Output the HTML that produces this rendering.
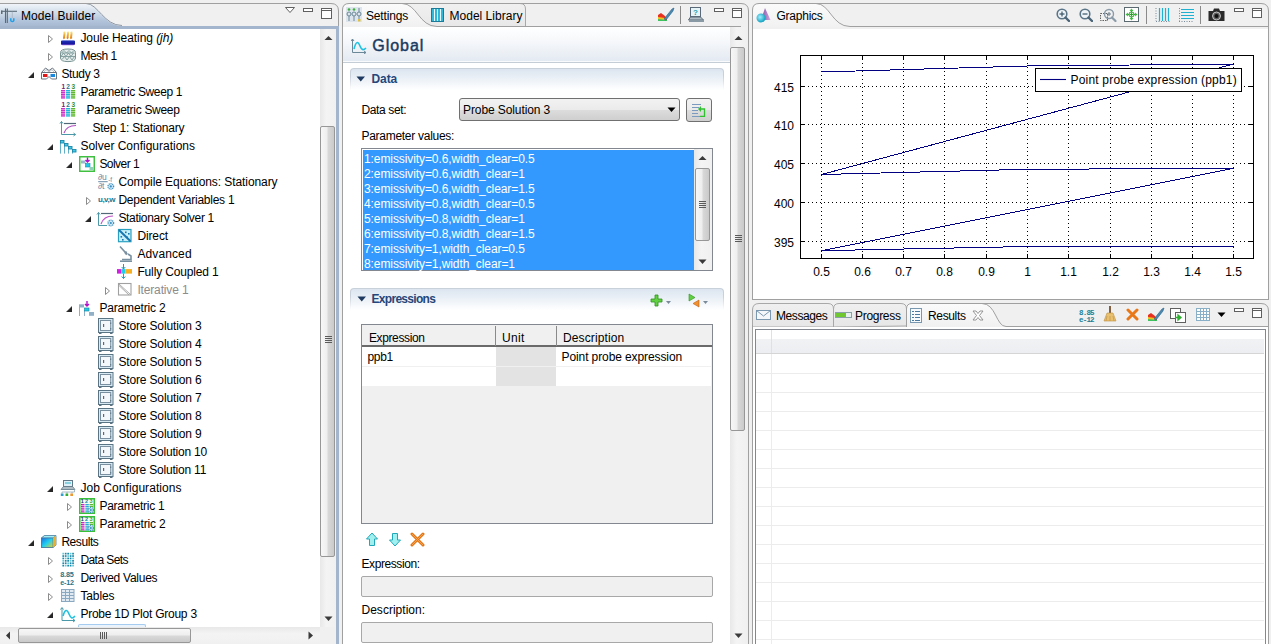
<!DOCTYPE html><html><head><meta charset="utf-8"><style>html,body{margin:0;padding:0;}body{width:1271px;height:644px;overflow:hidden;position:relative;background:#f0f0f0;font-family:"Liberation Sans", sans-serif;}div,svg{box-sizing:border-box;}</style></head><body>
<svg style="position:absolute;left:0px;top:0px;" width="342" height="30" viewBox="0 0 342 30"><defs><linearGradient id="mbg" x1="0" y1="0" x2="0" y2="1"><stop offset="0" stop-color="#f0f4f9"/><stop offset="0.3" stop-color="#d5e0ec"/><stop offset="0.65" stop-color="#b3c5db"/><stop offset="1" stop-color="#9fb3cc"/></linearGradient></defs><path d="M0,4 L86,4 C98,4 104,26 122,26 L122,29 L0,29 Z" fill="url(#mbg)"/><path d="M86,3.5 C98,3.5 104,25.5 122,25.5" stroke="#8e99a6" stroke-width="1" fill="none"/><path d="M0,3.5 L331,3.5 Q338.5,3.5 338.5,11 L338.5,26" stroke="#a0a0a0" stroke-width="1" fill="none"/><rect x="0" y="26" width="339" height="3" fill="#a3b5cc"/></svg>
<div style="position:absolute;left:336px;top:26px;width:3px;height:618px;background:#a3b5cc;"></div>
<svg style="position:absolute;left:0px;top:7px;" width="18" height="17" viewBox="0 0 18 17"><path d="M5.5,1.5 L5.5,16 M7.3,1.5 L7.3,16" stroke="#5a6a78" stroke-width="1.1" fill="none"/><path d="M1,4.3 L17,4.3" stroke="#5a6a78" stroke-width="1.1"/><rect x="1" y="3.5" width="1.5" height="3.5" fill="#5a6a78"/><path d="M12.3,4.8 L12.3,11" stroke="#a8b4c0" stroke-width="0.8"/><path d="M10.8,11.2 L10.8,13.5 Q10.8,14.5 12.3,14.5 Q13.8,14.5 13.8,13.5 L13.8,11.2" stroke="#20a0e8" stroke-width="1.5" fill="none"/></svg>
<div style="position:absolute;left:21px;top:10.24px;font-size:12px;line-height:12px;color:#000;white-space:nowrap;letter-spacing:0.068px;">Model Builder</div>
<svg style="position:absolute;left:284px;top:6px;" width="52" height="14" viewBox="0 0 52 14"><path d="M1.5,1.5 L10.5,1.5 L6,6.5 Z" fill="#fff" stroke="#606060" stroke-width="1"/><rect x="19.5" y="2.5" width="9" height="3" fill="#fff" stroke="#606060"/><rect x="37.5" y="2.5" width="10" height="10" fill="#fff" stroke="#606060"/><path d="M38,4.5 L47,4.5" stroke="#606060"/></svg>
<div style="position:absolute;left:0px;top:29px;width:320px;height:598px;background:#fff;"></div>
<div style="position:absolute;left:320px;top:29px;width:16px;height:598px;background:linear-gradient(to right,#e8e8e8,#f4f4f4 40%,#f0f0f0);"></div>
<div style="position:absolute;left:320px;top:126px;width:15px;height:431px;border:1px solid #979797;border-radius:2px;background:linear-gradient(to right,#f7f7f7 0%,#eeeeee 48%,#d9d9d9 52%,#cacaca 100%);"></div>
<svg style="position:absolute;left:325px;top:336px;" width="7" height="8" viewBox="0 0 7 8"><path d="M0,0.5 H7 M0,2.5 H7 M0,4.5 H7 M0,6.5 H7" stroke="#5a5a5a" stroke-width="1"/></svg>
<svg style="position:absolute;left:324px;top:35px;" width="9" height="6" viewBox="0 0 9 6"><path d="M0.5,5 L4.5,1 L8.5,5 Z" fill="#3a3a3a"/></svg>
<svg style="position:absolute;left:324px;top:616px;" width="9" height="6" viewBox="0 0 9 6"><path d="M0.5,0.5 L4.5,5 L8.5,0.5 Z" fill="#3a3a3a"/></svg>
<div style="position:absolute;left:0px;top:627px;width:320px;height:17px;background:linear-gradient(to bottom,#e8e8e8,#f4f4f4 40%,#f0f0f0);"></div>
<div style="position:absolute;left:18px;top:628px;width:173px;height:15px;border:1px solid #979797;border-radius:2px;background:linear-gradient(to bottom,#f7f7f7 0%,#eeeeee 48%,#d9d9d9 52%,#cacaca 100%);"></div>
<svg style="position:absolute;left:100px;top:632px;" width="8" height="7" viewBox="0 0 8 7"><path d="M0.5,0 V7 M2.5,0 V7 M4.5,0 V7 M6.5,0 V7" stroke="#5a5a5a" stroke-width="1"/></svg>
<svg style="position:absolute;left:5px;top:631px;" width="6" height="9" viewBox="0 0 6 9"><path d="M5,0.5 L1,4.5 L5,8.5 Z" fill="#3a3a3a"/></svg>
<svg style="position:absolute;left:308px;top:631px;" width="6" height="9" viewBox="0 0 6 9"><path d="M0.5,0.5 L5,4.5 L0.5,8.5 Z" fill="#3a3a3a"/></svg>
<div style="position:absolute;left:320px;top:627px;width:16px;height:17px;background:#f0f0f0;"></div>
<svg style="position:absolute;left:48px;top:35px;" width="6" height="9" viewBox="0 0 6 9"><path d="M0.5,0.5 L4.5,4 L0.5,7.5 Z" fill="#fff" stroke="#8c8c8c" stroke-width="1"/></svg>
<svg style="position:absolute;left:60px;top:30px;overflow:visible;" width="16" height="16" viewBox="0 0 16 16"><defs><linearGradient id="fl" x1="0" y1="0" x2="0" y2="1"><stop offset="0" stop-color="#f8e890"/><stop offset="0.5" stop-color="#f0a830"/><stop offset="1" stop-color="#e08010"/></linearGradient><linearGradient id="dk" x1="0" y1="0" x2="0" y2="1"><stop offset="0" stop-color="#5868d0"/><stop offset="0.25" stop-color="#1a28b0"/><stop offset="0.7" stop-color="#1818a0"/><stop offset="1" stop-color="#9060d8"/></linearGradient></defs><path d="M4.5,8.6 C3,6.5 5.5,4.5 4.2,1.6 M8,8.6 C6.5,6.5 9,4.5 7.7,1.6 M11.5,8.6 C10,6.5 12.5,4.5 11.2,1.6" stroke="url(#fl)" stroke-width="2" fill="none"/><path d="M1,11 Q1,10.3 3,10.3 L13,10.3 Q15,10.3 15,11 L15,14.3 Q15,15.3 13,15.3 L3,15.3 Q1,15.3 1,14.3 Z" fill="url(#dk)"/></svg>
<div style="position:absolute;left:80.4px;top:32.04px;font-size:12px;line-height:12px;color:#000;white-space:nowrap;letter-spacing:-0.067px;">Joule Heating <i>(jh)</i></div>
<svg style="position:absolute;left:48px;top:53px;" width="6" height="9" viewBox="0 0 6 9"><path d="M0.5,0.5 L4.5,4 L0.5,7.5 Z" fill="#fff" stroke="#8c8c8c" stroke-width="1"/></svg>
<svg style="position:absolute;left:60px;top:48px;overflow:visible;" width="16" height="16" viewBox="0 0 16 16"><path d="M0.5,4.5 Q0.5,1 8,1 Q15.5,1 15.5,4.5 L15.5,10 Q15.5,13.6 8,13.6 Q0.5,13.6 0.5,10 Z" fill="#e4ecec" stroke="#7a9494" stroke-width="1"/><path d="M1.5,5 L4,2.5 L6.5,5 L9,2.5 L11.5,5 L14,2.5 M1.5,5 L14.5,5 M1,8.5 L3.5,5 L6,8.5 L8.5,5 L11,8.5 L13.5,5 M1,8.5 L15,8.5 M2,11.5 L4.5,8.5 L7,12 L9.5,8.5 L12,12 L14.5,8.5" stroke="#7e9a9a" stroke-width="0.9" fill="none"/></svg>
<div style="position:absolute;left:80.4px;top:50.04px;font-size:12px;line-height:12px;color:#000;white-space:nowrap;letter-spacing:-0.496px;">Mesh 1</div>
<svg style="position:absolute;left:28px;top:72px;" width="7" height="7" viewBox="0 0 7 7"><path d="M6,0 L6,6 L0,6 Z" fill="#3c3c3c"/><path d="M6,1 L6,6 L1,6 Z" fill="#262626"/></svg>
<svg style="position:absolute;left:41px;top:66px;overflow:visible;" width="16" height="16" viewBox="0 0 16 16"><path d="M0.5,6.5 L4.5,2 L8,4.5 L11.5,2 L15.5,6.5" stroke="#6a7480" stroke-width="1" fill="none"/><path d="M3,6 L5,3.5 L8,6 L11,3.5 L13,6" stroke="#a8b0b8" stroke-width="0.8" fill="none"/><path d="M0.5,6.5 L15.5,6.5 L15.5,13 L10.5,13 L8,10.5 L5.5,13 L0.5,13 Z" fill="#ffffff" stroke="#6a7480" stroke-width="1"/><rect x="2" y="8" width="4.5" height="3" fill="#e01818"/><rect x="9.5" y="8" width="4.5" height="3" fill="#1888e0"/></svg>
<div style="position:absolute;left:61.4px;top:68.04px;font-size:12px;line-height:12px;color:#000;white-space:nowrap;letter-spacing:-0.353px;">Study 3</div>
<svg style="position:absolute;left:61px;top:84px;overflow:visible;" width="16" height="16" viewBox="0 0 16 16"><rect x="0" y="6.0" width="4.2" height="1.4" fill="#d030c8"/><rect x="0" y="7.8" width="4.2" height="1.4" fill="#d030c8"/><rect x="0" y="9.6" width="4.2" height="1.4" fill="#d030c8"/><rect x="0" y="11.4" width="4.2" height="1.4" fill="#d030c8"/><rect x="0" y="13.2" width="4.2" height="1.4" fill="#d030c8"/><rect x="5" y="6.0" width="4.2" height="1.4" fill="#20b8d8"/><rect x="5" y="7.8" width="4.2" height="1.4" fill="#20b8d8"/><rect x="5" y="9.6" width="4.2" height="1.4" fill="#20b8d8"/><rect x="5" y="11.4" width="4.2" height="1.4" fill="#20b8d8"/><rect x="5" y="13.2" width="4.2" height="1.4" fill="#20b8d8"/><rect x="10" y="6.0" width="4.2" height="1.4" fill="#60b830"/><rect x="10" y="7.8" width="4.2" height="1.4" fill="#60b830"/><rect x="10" y="9.6" width="4.2" height="1.4" fill="#60b830"/><rect x="10" y="11.4" width="4.2" height="1.4" fill="#60b830"/><rect x="10" y="13.2" width="4.2" height="1.4" fill="#60b830"/><text x="0.6" y="5" font-size="6.5" font-family="Liberation Sans" font-weight="bold" fill="#702070">1</text><text x="5.2" y="5" font-size="6.5" font-family="Liberation Sans" font-weight="bold" fill="#1a8098">2</text><text x="10.4" y="5" font-size="6.5" font-family="Liberation Sans" font-weight="bold" fill="#409020">3</text></svg>
<div style="position:absolute;left:80.4px;top:86.04px;font-size:12px;line-height:12px;color:#000;white-space:nowrap;letter-spacing:-0.351px;">Parametric Sweep 1</div>
<svg style="position:absolute;left:61px;top:102px;overflow:visible;" width="16" height="16" viewBox="0 0 16 16"><rect x="0" y="6.0" width="4.2" height="1.4" fill="#d030c8"/><rect x="0" y="7.8" width="4.2" height="1.4" fill="#d030c8"/><rect x="0" y="9.6" width="4.2" height="1.4" fill="#d030c8"/><rect x="0" y="11.4" width="4.2" height="1.4" fill="#d030c8"/><rect x="0" y="13.2" width="4.2" height="1.4" fill="#d030c8"/><rect x="5" y="6.0" width="4.2" height="1.4" fill="#20b8d8"/><rect x="5" y="7.8" width="4.2" height="1.4" fill="#20b8d8"/><rect x="5" y="9.6" width="4.2" height="1.4" fill="#20b8d8"/><rect x="5" y="11.4" width="4.2" height="1.4" fill="#20b8d8"/><rect x="5" y="13.2" width="4.2" height="1.4" fill="#20b8d8"/><rect x="10" y="6.0" width="4.2" height="1.4" fill="#60b830"/><rect x="10" y="7.8" width="4.2" height="1.4" fill="#60b830"/><rect x="10" y="9.6" width="4.2" height="1.4" fill="#60b830"/><rect x="10" y="11.4" width="4.2" height="1.4" fill="#60b830"/><rect x="10" y="13.2" width="4.2" height="1.4" fill="#60b830"/><text x="0.6" y="5" font-size="6.5" font-family="Liberation Sans" font-weight="bold" fill="#702070">1</text><text x="5.2" y="5" font-size="6.5" font-family="Liberation Sans" font-weight="bold" fill="#1a8098">2</text><text x="10.4" y="5" font-size="6.5" font-family="Liberation Sans" font-weight="bold" fill="#409020">3</text></svg>
<div style="position:absolute;left:86.4px;top:104.04px;font-size:12px;line-height:12px;color:#000;white-space:nowrap;letter-spacing:-0.304px;">Parametric Sweep</div>
<svg style="position:absolute;left:61px;top:120px;overflow:visible;" width="16" height="16" viewBox="0 0 16 16"><path d="M0.5,1.5 L0.5,14.5 L14.5,14.5" stroke="#4a98a8" stroke-width="1" fill="none"/><path d="M-1,3.5 L0.5,1.5 L2,3.5 M12.5,13 L14.5,14.5 L12.5,16" stroke="#4a98a8" fill="none"/><path d="M3,13 C5,7 9,5.5 15,5.5" stroke="#b050c0" stroke-width="1.2" fill="none"/><path d="M3,3.5 L15,3.5" stroke="#506878" stroke-width="1.2"/></svg>
<div style="position:absolute;left:92.4px;top:122.04px;font-size:12px;line-height:12px;color:#000;white-space:nowrap;letter-spacing:-0.187px;">Step 1: Stationary</div>
<svg style="position:absolute;left:47px;top:144px;" width="7" height="7" viewBox="0 0 7 7"><path d="M6,0 L6,6 L0,6 Z" fill="#3c3c3c"/><path d="M6,1 L6,6 L1,6 Z" fill="#262626"/></svg>
<svg style="position:absolute;left:60px;top:138px;overflow:visible;" width="16" height="16" viewBox="0 0 16 16"><path d="M0.5,2 L0.5,15.6 M4.5,5 L4.5,15.6 M8.5,8 L8.5,15.6 M12.5,11 L12.5,15.6" stroke="#60b0c8" stroke-width="1" fill="none"/><rect x="0.5" y="2.5" width="3.5" height="2.5" fill="#40c8e8" stroke="#1a88a8" stroke-width="0.9"/><rect x="4.5" y="5.5" width="3.5" height="2.5" fill="#40c8e8" stroke="#1a88a8" stroke-width="0.9"/><rect x="8.5" y="8.5" width="3.5" height="2.5" fill="#40c8e8" stroke="#1a88a8" stroke-width="0.9"/><rect x="12.5" y="11.5" width="3.5" height="2.5" fill="#40c8e8" stroke="#1a88a8" stroke-width="0.9"/></svg>
<div style="position:absolute;left:80.4px;top:140.04px;font-size:12px;line-height:12px;color:#000;white-space:nowrap;letter-spacing:-0.006px;">Solver Configurations</div>
<svg style="position:absolute;left:66px;top:162px;" width="7" height="7" viewBox="0 0 7 7"><path d="M6,0 L6,6 L0,6 Z" fill="#3c3c3c"/><path d="M6,1 L6,6 L1,6 Z" fill="#262626"/></svg>
<svg style="position:absolute;left:79px;top:156px;overflow:visible;" width="16" height="16" viewBox="0 0 16 16"><rect x="0.75" y="0.75" width="14.5" height="14.5" fill="#fff" stroke="#40c040" stroke-width="1.5"/><rect x="2" y="4.5" width="4.5" height="3" fill="#98b8d0"/><rect x="6.5" y="7.5" width="4.5" height="3.5" fill="#20c8e8" stroke="#1a90a8" stroke-width="0.6"/><rect x="10.5" y="11" width="4" height="3" fill="#90d0b8"/><path d="M8.5,1.5 L8.5,6 M6.5,4 L8.5,6 L10.5,4" stroke="#b010c8" stroke-width="1.4" fill="none"/></svg>
<div style="position:absolute;left:99.4px;top:158.04px;font-size:12px;line-height:12px;color:#000;white-space:nowrap;letter-spacing:-0.55px;">Solver 1</div>
<svg style="position:absolute;left:98px;top:174px;overflow:visible;" width="16" height="16" viewBox="0 0 16 16"><text x="0" y="6.3" font-size="8.5" font-family="Liberation Sans" fill="#6a8aa8" letter-spacing="-0.3">∂u</text><rect x="0.2" y="7.2" width="9.5" height="1" fill="#6a8aa8"/><text x="0" y="15" font-size="8.5" font-family="Liberation Sans" fill="#6a8aa8" letter-spacing="-0.3">∂t</text><text x="10.2" y="7.5" font-size="6.5" font-family="Liberation Sans" fill="#6a8aa8">-f</text><circle cx="12.8" cy="12.4" r="2.8" fill="#cfe8f6" stroke="#3a90c0" stroke-width="1.3" stroke-dasharray="1 0.8"/><circle cx="12.8" cy="12.4" r="1.12" fill="#3a90c0"/></svg>
<div style="position:absolute;left:118.4px;top:176.04px;font-size:12px;line-height:12px;color:#000;white-space:nowrap;letter-spacing:-0.079px;">Compile Equations: Stationary</div>
<svg style="position:absolute;left:86px;top:197px;" width="6" height="9" viewBox="0 0 6 9"><path d="M0.5,0.5 L4.5,4 L0.5,7.5 Z" fill="#fff" stroke="#8c8c8c" stroke-width="1"/></svg>
<svg style="position:absolute;left:98px;top:192px;overflow:visible;" width="16" height="16" viewBox="0 0 16 16"><text x="0" y="10.4" font-size="8" font-weight="bold" font-family="Liberation Sans" fill="#1a7890" letter-spacing="-0.5">u,v,w</text></svg>
<div style="position:absolute;left:118.4px;top:194.04px;font-size:12px;line-height:12px;color:#000;white-space:nowrap;letter-spacing:-0.251px;">Dependent Variables 1</div>
<svg style="position:absolute;left:85px;top:216px;" width="7" height="7" viewBox="0 0 7 7"><path d="M6,0 L6,6 L0,6 Z" fill="#3c3c3c"/><path d="M6,1 L6,6 L1,6 Z" fill="#262626"/></svg>
<svg style="position:absolute;left:98px;top:210px;overflow:visible;" width="16" height="16" viewBox="0 0 16 16"><path d="M0.5,2.5 L0.5,15.5 L9,15.5" stroke="#4a98a8" stroke-width="1" fill="none"/><path d="M-1,4.5 L0.5,2.5 L2,4.5" stroke="#4a98a8" fill="none"/><path d="M3,14 C5,8 9,6 15,6" stroke="#c050c8" stroke-width="1.2" fill="none"/><path d="M3,3.5 L15,3.5" stroke="#506878" stroke-width="1.2"/><circle cx="12.8" cy="13" r="2.8" fill="#cfe8f6" stroke="#3a90c0" stroke-width="1.3" stroke-dasharray="1 0.8"/><circle cx="12.8" cy="13" r="1.12" fill="#3a90c0"/></svg>
<div style="position:absolute;left:118.4px;top:212.04px;font-size:12px;line-height:12px;color:#000;white-space:nowrap;letter-spacing:-0.306px;">Stationary Solver 1</div>
<svg style="position:absolute;left:117px;top:228px;overflow:visible;" width="16" height="16" viewBox="0 0 16 16"><rect x="1.5" y="1.5" width="12.5" height="12.2" fill="#c8f0f8" stroke="#2aa0c0" stroke-width="1.2"/><path d="M2,2 L13.5,13.2" stroke="#1a78b0" stroke-width="2"/><rect x="8" y="3.5" width="1.6" height="1.6" fill="#1a78b0"/><rect x="11" y="5" width="1.6" height="1.6" fill="#1a78b0"/><rect x="3.5" y="8" width="1.6" height="1.6" fill="#1a78b0"/><rect x="5" y="11" width="1.6" height="1.6" fill="#1a78b0"/><rect x="9.5" y="8.5" width="1.5" height="1.5" fill="#1a78b0"/></svg>
<div style="position:absolute;left:137.4px;top:230.04px;font-size:12px;line-height:12px;color:#000;white-space:nowrap;letter-spacing:-0.12px;">Direct</div>
<svg style="position:absolute;left:117px;top:246px;overflow:visible;" width="16" height="16" viewBox="0 0 16 16"><path d="M3,0.5 L8,6 L10,6.5" stroke="#7890a0" stroke-width="1.6" fill="none"/><path d="M8,6 L10,8.5" stroke="#7890a0" stroke-width="2.2"/><path d="M11,8 L14,10 L14,13.5 L5,13.5" stroke="#7890a0" stroke-width="1.6" fill="none"/><path d="M3,15.2 L15,15.2" stroke="#7890a0" stroke-width="1.6"/></svg>
<div style="position:absolute;left:137.4px;top:248.04px;font-size:12px;line-height:12px;color:#000;white-space:nowrap;letter-spacing:0.114px;">Advanced</div>
<svg style="position:absolute;left:117px;top:264px;overflow:visible;" width="16" height="16" viewBox="0 0 16 16"><rect x="0" y="5.1" width="4.3" height="4.5" fill="#d020e0"/><rect x="4.3" y="5.1" width="4.2" height="4.5" fill="#20d0e8"/><rect x="8.5" y="5.1" width="6.5" height="4.5" fill="#f8b020"/><path d="M6.5,0 L6.5,5 M4.7,3 L6.5,5 L8.3,3 M6.5,9.6 L6.5,14.5 M4.7,12.5 L6.5,14.5 L8.3,12.5" stroke="#2a98b0" stroke-width="1" fill="none"/></svg>
<div style="position:absolute;left:137.4px;top:266.04px;font-size:12px;line-height:12px;color:#000;white-space:nowrap;letter-spacing:-0.143px;">Fully Coupled 1</div>
<svg style="position:absolute;left:105px;top:287px;" width="6" height="9" viewBox="0 0 6 9"><path d="M0.5,0.5 L4.5,4 L0.5,7.5 Z" fill="#fff" stroke="#8c8c8c" stroke-width="1"/></svg>
<svg style="position:absolute;left:117px;top:282px;overflow:visible;" width="16" height="16" viewBox="0 0 16 16"><rect x="1.5" y="1.5" width="12.5" height="11.5" fill="#fff" stroke="#a0a0a0" stroke-width="1.1"/><path d="M2,2 L13.5,12.5 M2,3.5 L12,13" stroke="#a0a0a0" stroke-width="0.9"/></svg>
<div style="position:absolute;left:137.4px;top:284.04px;font-size:12px;line-height:12px;color:#000;white-space:nowrap;letter-spacing:-0.152px;"><span style="color:#8c8c8c">Iterative 1</span></div>
<svg style="position:absolute;left:66px;top:306px;" width="7" height="7" viewBox="0 0 7 7"><path d="M6,0 L6,6 L0,6 Z" fill="#3c3c3c"/><path d="M6,1 L6,6 L1,6 Z" fill="#262626"/></svg>
<svg style="position:absolute;left:79px;top:300px;overflow:visible;" width="16" height="16" viewBox="0 0 16 16"><path d="M0.5,7 L0.5,16 M5.5,10 L5.5,16" stroke="#90b0c8" stroke-width="1"/><rect x="0" y="4.3" width="5" height="3.2" fill="#90b0c8"/><rect x="5.5" y="8" width="4.5" height="3" fill="#20c8e8" stroke="#1a90a8" stroke-width="0.7"/><rect x="10" y="12" width="5" height="3.8" fill="#90b0c8"/><path d="M8,1 L8,6 M6,4 L8,6 L10,4" stroke="#b010c8" stroke-width="1.4" fill="none"/></svg>
<div style="position:absolute;left:99.4px;top:302.04px;font-size:12px;line-height:12px;color:#000;white-space:nowrap;letter-spacing:-0.159px;">Parametric 2</div>
<svg style="position:absolute;left:98px;top:318px;overflow:visible;" width="16" height="16" viewBox="0 0 16 16"><rect x="0.5" y="0.5" width="14.5" height="14" fill="#d8eaf4" stroke="#5a7484" stroke-width="1"/><rect x="2.5" y="2.5" width="10.2" height="10" fill="#f4f8fb" stroke="#7a90a0" stroke-width="1"/><rect x="5" y="6" width="1.2" height="3" fill="#5a6a78"/><rect x="12.2" y="4.5" width="1" height="1.5" fill="#5a7484"/><rect x="12.2" y="10" width="1" height="1.5" fill="#5a7484"/><rect x="1" y="14.5" width="2.5" height="1.5" fill="#5a7484"/><rect x="12" y="14.5" width="2.5" height="1.5" fill="#5a7484"/></svg>
<div style="position:absolute;left:118.4px;top:320.04px;font-size:12px;line-height:12px;color:#000;white-space:nowrap;letter-spacing:-0.148px;">Store Solution 3</div>
<svg style="position:absolute;left:98px;top:336px;overflow:visible;" width="16" height="16" viewBox="0 0 16 16"><rect x="0.5" y="0.5" width="14.5" height="14" fill="#d8eaf4" stroke="#5a7484" stroke-width="1"/><rect x="2.5" y="2.5" width="10.2" height="10" fill="#f4f8fb" stroke="#7a90a0" stroke-width="1"/><rect x="5" y="6" width="1.2" height="3" fill="#5a6a78"/><rect x="12.2" y="4.5" width="1" height="1.5" fill="#5a7484"/><rect x="12.2" y="10" width="1" height="1.5" fill="#5a7484"/><rect x="1" y="14.5" width="2.5" height="1.5" fill="#5a7484"/><rect x="12" y="14.5" width="2.5" height="1.5" fill="#5a7484"/></svg>
<div style="position:absolute;left:118.4px;top:338.04px;font-size:12px;line-height:12px;color:#000;white-space:nowrap;letter-spacing:-0.148px;">Store Solution 4</div>
<svg style="position:absolute;left:98px;top:354px;overflow:visible;" width="16" height="16" viewBox="0 0 16 16"><rect x="0.5" y="0.5" width="14.5" height="14" fill="#d8eaf4" stroke="#5a7484" stroke-width="1"/><rect x="2.5" y="2.5" width="10.2" height="10" fill="#f4f8fb" stroke="#7a90a0" stroke-width="1"/><rect x="5" y="6" width="1.2" height="3" fill="#5a6a78"/><rect x="12.2" y="4.5" width="1" height="1.5" fill="#5a7484"/><rect x="12.2" y="10" width="1" height="1.5" fill="#5a7484"/><rect x="1" y="14.5" width="2.5" height="1.5" fill="#5a7484"/><rect x="12" y="14.5" width="2.5" height="1.5" fill="#5a7484"/></svg>
<div style="position:absolute;left:118.4px;top:356.04px;font-size:12px;line-height:12px;color:#000;white-space:nowrap;letter-spacing:-0.148px;">Store Solution 5</div>
<svg style="position:absolute;left:98px;top:372px;overflow:visible;" width="16" height="16" viewBox="0 0 16 16"><rect x="0.5" y="0.5" width="14.5" height="14" fill="#d8eaf4" stroke="#5a7484" stroke-width="1"/><rect x="2.5" y="2.5" width="10.2" height="10" fill="#f4f8fb" stroke="#7a90a0" stroke-width="1"/><rect x="5" y="6" width="1.2" height="3" fill="#5a6a78"/><rect x="12.2" y="4.5" width="1" height="1.5" fill="#5a7484"/><rect x="12.2" y="10" width="1" height="1.5" fill="#5a7484"/><rect x="1" y="14.5" width="2.5" height="1.5" fill="#5a7484"/><rect x="12" y="14.5" width="2.5" height="1.5" fill="#5a7484"/></svg>
<div style="position:absolute;left:118.4px;top:374.04px;font-size:12px;line-height:12px;color:#000;white-space:nowrap;letter-spacing:-0.148px;">Store Solution 6</div>
<svg style="position:absolute;left:98px;top:390px;overflow:visible;" width="16" height="16" viewBox="0 0 16 16"><rect x="0.5" y="0.5" width="14.5" height="14" fill="#d8eaf4" stroke="#5a7484" stroke-width="1"/><rect x="2.5" y="2.5" width="10.2" height="10" fill="#f4f8fb" stroke="#7a90a0" stroke-width="1"/><rect x="5" y="6" width="1.2" height="3" fill="#5a6a78"/><rect x="12.2" y="4.5" width="1" height="1.5" fill="#5a7484"/><rect x="12.2" y="10" width="1" height="1.5" fill="#5a7484"/><rect x="1" y="14.5" width="2.5" height="1.5" fill="#5a7484"/><rect x="12" y="14.5" width="2.5" height="1.5" fill="#5a7484"/></svg>
<div style="position:absolute;left:118.4px;top:392.04px;font-size:12px;line-height:12px;color:#000;white-space:nowrap;letter-spacing:-0.148px;">Store Solution 7</div>
<svg style="position:absolute;left:98px;top:408px;overflow:visible;" width="16" height="16" viewBox="0 0 16 16"><rect x="0.5" y="0.5" width="14.5" height="14" fill="#d8eaf4" stroke="#5a7484" stroke-width="1"/><rect x="2.5" y="2.5" width="10.2" height="10" fill="#f4f8fb" stroke="#7a90a0" stroke-width="1"/><rect x="5" y="6" width="1.2" height="3" fill="#5a6a78"/><rect x="12.2" y="4.5" width="1" height="1.5" fill="#5a7484"/><rect x="12.2" y="10" width="1" height="1.5" fill="#5a7484"/><rect x="1" y="14.5" width="2.5" height="1.5" fill="#5a7484"/><rect x="12" y="14.5" width="2.5" height="1.5" fill="#5a7484"/></svg>
<div style="position:absolute;left:118.4px;top:410.04px;font-size:12px;line-height:12px;color:#000;white-space:nowrap;letter-spacing:-0.148px;">Store Solution 8</div>
<svg style="position:absolute;left:98px;top:426px;overflow:visible;" width="16" height="16" viewBox="0 0 16 16"><rect x="0.5" y="0.5" width="14.5" height="14" fill="#d8eaf4" stroke="#5a7484" stroke-width="1"/><rect x="2.5" y="2.5" width="10.2" height="10" fill="#f4f8fb" stroke="#7a90a0" stroke-width="1"/><rect x="5" y="6" width="1.2" height="3" fill="#5a6a78"/><rect x="12.2" y="4.5" width="1" height="1.5" fill="#5a7484"/><rect x="12.2" y="10" width="1" height="1.5" fill="#5a7484"/><rect x="1" y="14.5" width="2.5" height="1.5" fill="#5a7484"/><rect x="12" y="14.5" width="2.5" height="1.5" fill="#5a7484"/></svg>
<div style="position:absolute;left:118.4px;top:428.04px;font-size:12px;line-height:12px;color:#000;white-space:nowrap;letter-spacing:-0.148px;">Store Solution 9</div>
<svg style="position:absolute;left:98px;top:444px;overflow:visible;" width="16" height="16" viewBox="0 0 16 16"><rect x="0.5" y="0.5" width="14.5" height="14" fill="#d8eaf4" stroke="#5a7484" stroke-width="1"/><rect x="2.5" y="2.5" width="10.2" height="10" fill="#f4f8fb" stroke="#7a90a0" stroke-width="1"/><rect x="5" y="6" width="1.2" height="3" fill="#5a6a78"/><rect x="12.2" y="4.5" width="1" height="1.5" fill="#5a7484"/><rect x="12.2" y="10" width="1" height="1.5" fill="#5a7484"/><rect x="1" y="14.5" width="2.5" height="1.5" fill="#5a7484"/><rect x="12" y="14.5" width="2.5" height="1.5" fill="#5a7484"/></svg>
<div style="position:absolute;left:118.4px;top:446.04px;font-size:12px;line-height:12px;color:#000;white-space:nowrap;letter-spacing:-0.199px;">Store Solution 10</div>
<svg style="position:absolute;left:98px;top:462px;overflow:visible;" width="16" height="16" viewBox="0 0 16 16"><rect x="0.5" y="0.5" width="14.5" height="14" fill="#d8eaf4" stroke="#5a7484" stroke-width="1"/><rect x="2.5" y="2.5" width="10.2" height="10" fill="#f4f8fb" stroke="#7a90a0" stroke-width="1"/><rect x="5" y="6" width="1.2" height="3" fill="#5a6a78"/><rect x="12.2" y="4.5" width="1" height="1.5" fill="#5a7484"/><rect x="12.2" y="10" width="1" height="1.5" fill="#5a7484"/><rect x="1" y="14.5" width="2.5" height="1.5" fill="#5a7484"/><rect x="12" y="14.5" width="2.5" height="1.5" fill="#5a7484"/></svg>
<div style="position:absolute;left:118.4px;top:464.04px;font-size:12px;line-height:12px;color:#000;white-space:nowrap;letter-spacing:-0.199px;">Store Solution 11</div>
<svg style="position:absolute;left:47px;top:486px;" width="7" height="7" viewBox="0 0 7 7"><path d="M6,0 L6,6 L0,6 Z" fill="#3c3c3c"/><path d="M6,1 L6,6 L1,6 Z" fill="#262626"/></svg>
<svg style="position:absolute;left:60px;top:480px;overflow:visible;" width="16" height="16" viewBox="0 0 16 16"><rect x="3.5" y="0.5" width="9" height="6" fill="#e0f0f8" stroke="#607888"/><rect x="5" y="2.5" width="6" height="1" fill="#30b0c8"/><path d="M1,9.5 L15,9.5 L12.5,6.5 L3.5,6.5 Z" fill="#b0bcc4" stroke="#607888" stroke-width="0.8"/><path d="M14.5,9.5 L14.5,12 L2,12 L2,13.5 M7,12 L7,13.5 M12,12 L12,13.5" stroke="#90a8b8" stroke-width="0.8" fill="none"/><rect x="0.8" y="13.5" width="2.7" height="2.5" fill="#30a0d0"/><rect x="5.5" y="13.5" width="2.7" height="2.5" fill="#30b030"/><rect x="10.3" y="13.5" width="2.7" height="2.5" fill="#f09830"/></svg>
<div style="position:absolute;left:80.4px;top:482.04px;font-size:12px;line-height:12px;color:#000;white-space:nowrap;letter-spacing:0.062px;">Job Configurations</div>
<svg style="position:absolute;left:67px;top:503px;" width="6" height="9" viewBox="0 0 6 9"><path d="M0.5,0.5 L4.5,4 L0.5,7.5 Z" fill="#fff" stroke="#8c8c8c" stroke-width="1"/></svg>
<svg style="position:absolute;left:79px;top:498px;overflow:visible;" width="16" height="16" viewBox="0 0 16 16"><rect x="0.75" y="0.75" width="14.5" height="14.5" fill="#f4fff4" stroke="#38c038" stroke-width="1.5"/><rect x="2" y="6.0" width="3.5" height="1.2" fill="#d020c8"/><rect x="6.3" y="6.0" width="3.5" height="1.2" fill="#20b0d8"/><rect x="2" y="7.8" width="3.5" height="1.2" fill="#d020c8"/><rect x="6.3" y="7.8" width="3.5" height="1.2" fill="#20b0d8"/><rect x="2" y="9.6" width="3.5" height="1.2" fill="#d020c8"/><rect x="6.3" y="9.6" width="3.5" height="1.2" fill="#20b0d8"/><rect x="2" y="11.4" width="3.5" height="1.2" fill="#d020c8"/><rect x="6.3" y="11.4" width="3.5" height="1.2" fill="#20b0d8"/><rect x="2" y="13.2" width="3.5" height="1.2" fill="#d020c8"/><rect x="6.3" y="13.2" width="3.5" height="1.2" fill="#20b0d8"/><rect x="10.5" y="6.0" width="3.5" height="1.2" fill="#60b830"/><rect x="10.5" y="7.8" width="3.5" height="1.2" fill="#60b830"/><text x="1.8" y="5.3" font-size="5.5" font-weight="bold" font-family="Liberation Sans" fill="#303080">1</text><text x="6" y="5.3" font-size="5.5" font-weight="bold" font-family="Liberation Sans" fill="#2080a0">2</text><text x="10.5" y="5.3" font-size="5.5" font-weight="bold" font-family="Liberation Sans" fill="#50a030">3</text><circle cx="11.8" cy="12" r="2.5" fill="#cfe8f6" stroke="#3a90c0" stroke-width="1.3" stroke-dasharray="1 0.8"/><circle cx="11.8" cy="12" r="1.00" fill="#3a90c0"/></svg>
<div style="position:absolute;left:99.4px;top:500.04px;font-size:12px;line-height:12px;color:#000;white-space:nowrap;letter-spacing:-0.25px;">Parametric 1</div>
<svg style="position:absolute;left:67px;top:521px;" width="6" height="9" viewBox="0 0 6 9"><path d="M0.5,0.5 L4.5,4 L0.5,7.5 Z" fill="#fff" stroke="#8c8c8c" stroke-width="1"/></svg>
<svg style="position:absolute;left:79px;top:516px;overflow:visible;" width="16" height="16" viewBox="0 0 16 16"><rect x="0.75" y="0.75" width="14.5" height="14.5" fill="#f4fff4" stroke="#38c038" stroke-width="1.5"/><rect x="2" y="6.0" width="3.5" height="1.2" fill="#d020c8"/><rect x="6.3" y="6.0" width="3.5" height="1.2" fill="#20b0d8"/><rect x="2" y="7.8" width="3.5" height="1.2" fill="#d020c8"/><rect x="6.3" y="7.8" width="3.5" height="1.2" fill="#20b0d8"/><rect x="2" y="9.6" width="3.5" height="1.2" fill="#d020c8"/><rect x="6.3" y="9.6" width="3.5" height="1.2" fill="#20b0d8"/><rect x="2" y="11.4" width="3.5" height="1.2" fill="#d020c8"/><rect x="6.3" y="11.4" width="3.5" height="1.2" fill="#20b0d8"/><rect x="2" y="13.2" width="3.5" height="1.2" fill="#d020c8"/><rect x="6.3" y="13.2" width="3.5" height="1.2" fill="#20b0d8"/><rect x="10.5" y="6.0" width="3.5" height="1.2" fill="#60b830"/><rect x="10.5" y="7.8" width="3.5" height="1.2" fill="#60b830"/><text x="1.8" y="5.3" font-size="5.5" font-weight="bold" font-family="Liberation Sans" fill="#303080">1</text><text x="6" y="5.3" font-size="5.5" font-weight="bold" font-family="Liberation Sans" fill="#2080a0">2</text><text x="10.5" y="5.3" font-size="5.5" font-weight="bold" font-family="Liberation Sans" fill="#50a030">3</text><circle cx="11.8" cy="12" r="2.5" fill="#cfe8f6" stroke="#3a90c0" stroke-width="1.3" stroke-dasharray="1 0.8"/><circle cx="11.8" cy="12" r="1.00" fill="#3a90c0"/></svg>
<div style="position:absolute;left:99.4px;top:518.04px;font-size:12px;line-height:12px;color:#000;white-space:nowrap;letter-spacing:-0.159px;">Parametric 2</div>
<svg style="position:absolute;left:28px;top:540px;" width="7" height="7" viewBox="0 0 7 7"><path d="M6,0 L6,6 L0,6 Z" fill="#3c3c3c"/><path d="M6,1 L6,6 L1,6 Z" fill="#262626"/></svg>
<svg style="position:absolute;left:41px;top:534px;overflow:visible;" width="16" height="16" viewBox="0 0 16 16"><defs><linearGradient id="rf" x1="0" y1="0" x2="1" y2="1"><stop offset="0" stop-color="#1a70e0"/><stop offset="0.5" stop-color="#20d0f0"/><stop offset="1" stop-color="#f0d020"/></linearGradient></defs><path d="M0.5,4 L3.5,1.5 L15,1.5 L15,11 L12,13.5 L0.5,13.5 Z" fill="#e8c040" stroke="#4a7aa0" stroke-width="0.8"/><path d="M0.5,4 L3.5,1.5 L15,1.5 L12,4 Z" fill="#a0f0f8" stroke="#4a7aa0" stroke-width="0.6"/><rect x="0.5" y="4" width="11.5" height="9.5" fill="url(#rf)" stroke="#4a7aa0" stroke-width="0.8"/><path d="M12,4 L15,1.5 L15,11 L12,13.5 Z" fill="#e8b030"/></svg>
<div style="position:absolute;left:61.4px;top:536.04px;font-size:12px;line-height:12px;color:#000;white-space:nowrap;letter-spacing:-0.436px;">Results</div>
<svg style="position:absolute;left:48px;top:557px;" width="6" height="9" viewBox="0 0 6 9"><path d="M0.5,0.5 L4.5,4 L0.5,7.5 Z" fill="#fff" stroke="#8c8c8c" stroke-width="1"/></svg>
<svg style="position:absolute;left:60px;top:552px;overflow:visible;" width="16" height="16" viewBox="0 0 16 16"><rect x="2.40" y="0.80" width="1.7" height="1.7" fill="#60c8d8"/><rect x="2.40" y="3.20" width="1.7" height="1.7" fill="#1a88a8"/><rect x="2.40" y="5.60" width="1.7" height="1.7" fill="#1a88a8"/><rect x="2.40" y="8.00" width="1.7" height="1.7" fill="#60c8d8"/><rect x="2.40" y="10.40" width="1.7" height="1.7" fill="#1a88a8"/><rect x="2.40" y="12.80" width="1.7" height="1.7" fill="#1a88a8"/><rect x="4.85" y="0.80" width="1.7" height="1.7" fill="#1a88a8"/><rect x="4.85" y="3.20" width="1.7" height="1.7" fill="#1a88a8"/><rect x="4.85" y="5.60" width="1.7" height="1.7" fill="#60c8d8"/><rect x="4.85" y="8.00" width="1.7" height="1.7" fill="#1a88a8"/><rect x="4.85" y="10.40" width="1.7" height="1.7" fill="#1a88a8"/><rect x="4.85" y="12.80" width="1.7" height="1.7" fill="#60c8d8"/><rect x="7.30" y="0.80" width="1.7" height="1.7" fill="#1a88a8"/><rect x="7.30" y="3.20" width="1.7" height="1.7" fill="#60c8d8"/><rect x="7.30" y="5.60" width="1.7" height="1.7" fill="#1a88a8"/><rect x="7.30" y="8.00" width="1.7" height="1.7" fill="#1a88a8"/><rect x="7.30" y="10.40" width="1.7" height="1.7" fill="#60c8d8"/><rect x="7.30" y="12.80" width="1.7" height="1.7" fill="#1a88a8"/><rect x="9.75" y="0.80" width="1.7" height="1.7" fill="#60c8d8"/><rect x="9.75" y="3.20" width="1.7" height="1.7" fill="#1a88a8"/><rect x="9.75" y="5.60" width="1.7" height="1.7" fill="#1a88a8"/><rect x="9.75" y="8.00" width="1.7" height="1.7" fill="#60c8d8"/><rect x="9.75" y="10.40" width="1.7" height="1.7" fill="#1a88a8"/><rect x="9.75" y="12.80" width="1.7" height="1.7" fill="#1a88a8"/><rect x="12.20" y="0.80" width="1.7" height="1.7" fill="#1a88a8"/><rect x="12.20" y="3.20" width="1.7" height="1.7" fill="#1a88a8"/><rect x="12.20" y="5.60" width="1.7" height="1.7" fill="#60c8d8"/><rect x="12.20" y="8.00" width="1.7" height="1.7" fill="#1a88a8"/><rect x="12.20" y="10.40" width="1.7" height="1.7" fill="#1a88a8"/><rect x="12.20" y="12.80" width="1.7" height="1.7" fill="#60c8d8"/></svg>
<div style="position:absolute;left:80.4px;top:554.04px;font-size:12px;line-height:12px;color:#000;white-space:nowrap;letter-spacing:-0.562px;">Data Sets</div>
<svg style="position:absolute;left:48px;top:575px;" width="6" height="9" viewBox="0 0 6 9"><path d="M0.5,0.5 L4.5,4 L0.5,7.5 Z" fill="#fff" stroke="#8c8c8c" stroke-width="1"/></svg>
<svg style="position:absolute;left:60px;top:570px;overflow:visible;" width="16" height="16" viewBox="0 0 16 16"><text x="0.3" y="7.2" font-size="7.2" font-weight="bold" font-family="Liberation Sans" fill="#207890" letter-spacing="-0.2">8.85</text><text x="0.3" y="15" font-size="7.2" font-weight="bold" font-family="Liberation Sans" fill="#207890" letter-spacing="-0.2">e-12</text></svg>
<div style="position:absolute;left:80.4px;top:572.04px;font-size:12px;line-height:12px;color:#000;white-space:nowrap;letter-spacing:-0.253px;">Derived Values</div>
<svg style="position:absolute;left:48px;top:593px;" width="6" height="9" viewBox="0 0 6 9"><path d="M0.5,0.5 L4.5,4 L0.5,7.5 Z" fill="#fff" stroke="#8c8c8c" stroke-width="1"/></svg>
<svg style="position:absolute;left:60px;top:588px;overflow:visible;" width="16" height="16" viewBox="0 0 16 16"><rect x="1.5" y="1.5" width="12.5" height="12" fill="#dfeaf2" stroke="#8aa8c0"/><path d="M5.5,1.5 L5.5,13.5" stroke="#8aa8c0"/><path d="M9.5,1.5 L9.5,13.5" stroke="#8aa8c0"/><path d="M1.5,4.5 L14,4.5" stroke="#8aa8c0"/><path d="M1.5,7.5 L14,7.5" stroke="#8aa8c0"/><path d="M1.5,10.5 L14,10.5" stroke="#8aa8c0"/></svg>
<div style="position:absolute;left:80.4px;top:590.04px;font-size:12px;line-height:12px;color:#000;white-space:nowrap;letter-spacing:-0.098px;">Tables</div>
<svg style="position:absolute;left:47px;top:612px;" width="7" height="7" viewBox="0 0 7 7"><path d="M6,0 L6,6 L0,6 Z" fill="#3c3c3c"/><path d="M6,1 L6,6 L1,6 Z" fill="#262626"/></svg>
<svg style="position:absolute;left:60px;top:606px;overflow:visible;" width="16" height="16" viewBox="0 0 16 16"><path d="M2,2 L2,14.5 L15,14.5" stroke="#4a98a8" stroke-width="1" fill="none"/><path d="M0.5,3.5 L2,1.5 L3.5,3.5 M13,13 L15,14.5 L13,16" stroke="#4a98a8" fill="none"/><path d="M3,10 C5,3 7,3 9,8 C11,13 12.5,13 15,10" stroke="#20c0e0" stroke-width="1.6" fill="none"/></svg>
<div style="position:absolute;left:80.4px;top:608.04px;font-size:12px;line-height:12px;color:#000;white-space:nowrap;letter-spacing:-0.236px;">Probe 1D Plot Group 3</div>
<div style="position:absolute;left:78px;top:624px;width:68px;height:3px;border:1px solid #a6cdf0;border-bottom:none;border-radius:2px 2px 0 0;background:#eaf2fb;"></div>
<svg style="position:absolute;left:340px;top:0px;" width="412" height="30" viewBox="0 0 412 30"><defs><linearGradient id="stg" x1="0" y1="0" x2="0" y2="1"><stop offset="0" stop-color="#fbfbfb"/><stop offset="1" stop-color="#f0f0f0"/></linearGradient><linearGradient id="mlg" x1="0" y1="0" x2="0" y2="1"><stop offset="0" stop-color="#f0f0f0"/><stop offset="1" stop-color="#e8e8e8"/></linearGradient></defs><path d="M62,3.5 L180,3.5 Q185.5,3.5 185.5,9 L185.5,26.5 L97,26.5 C79,26.5 77,3.5 62,3.5 Z" fill="url(#mlg)"/><path d="M130,3.5 L180,3.5 Q185.5,3.5 185.5,9 L185.5,26" stroke="#a8a8a8" stroke-width="1" fill="none"/><path d="M2.5,28 L2.5,10 Q2.5,3.5 9,3.5 L62,3.5 C77,3.5 79,27 97,27 L97,28 Z" fill="url(#stg)"/><path d="M2.5,27 L2.5,10 Q2.5,3.5 9,3.5 L62,3.5 C77,3.5 79,26.5 97,26.5 L401,26.5" stroke="#a0a0a0" stroke-width="1" fill="none"/><path d="M62,3.5 L401,3.5 Q408.5,3.5 408.5,11 L408.5,30" stroke="#a0a0a0" stroke-width="1" fill="none"/></svg>
<div style="position:absolute;left:342px;top:27px;width:1px;height:617px;background:#a0a0a0;"></div>
<div style="position:absolute;left:748px;top:27px;width:1px;height:617px;background:#a0a0a0;"></div>
<svg style="position:absolute;left:346px;top:7px;" width="16" height="15" viewBox="0 0 16 15"><rect x="0" y="0" width="16" height="15" fill="#dde4ec"/><circle cx="3" cy="2.5" r="1.3" fill="#40b040"/><circle cx="8" cy="2.5" r="1.3" fill="#40b040"/><circle cx="3" cy="7" r="2" fill="none" stroke="#6a8898"/><circle cx="8" cy="7" r="2" fill="none" stroke="#6a8898"/><circle cx="13" cy="7" r="2" fill="none" stroke="#6a8898"/><path d="M3,9 V14 M8,9 V14 M13,1 V5 M13,9 V12" stroke="#6a8898"/><rect x="12" y="12" width="2.5" height="2.5" fill="#e0c040"/></svg>
<div style="position:absolute;left:366px;top:10.04px;font-size:12px;line-height:12px;color:#000;white-space:nowrap;letter-spacing:-0.165px;">Settings</div>
<svg style="position:absolute;left:431px;top:8px;" width="13" height="14" viewBox="0 0 13 14"><rect x="0.5" y="0.5" width="12" height="13" fill="#30b8d8" stroke="#1a7a98"/><path d="M3.5,1 V13 M6.5,1 V13 M9.5,1 V13" stroke="#e8f8ff" stroke-width="1"/></svg>
<div style="position:absolute;left:449.5px;top:10.04px;font-size:12px;line-height:12px;color:#000;white-space:nowrap;letter-spacing:0.017px;">Model Library</div>
<svg style="position:absolute;left:657px;top:7px;" width="18" height="15" viewBox="0 0 18 15"><path d="M1,14 L1,8 L4,6 L8,9 L10,12 L10,14 Z" fill="#e83020"/><path d="M1,14 L1,10 L8,11 L10,14 Z" fill="#f0c020"/><path d="M1,14 L1,12 L10,13 L10,14 Z" fill="#40c060"/><path d="M7,12 L15,2 L17,1 L16,4 L9,13 Z" fill="#4a8ab0" stroke="#2a6088" stroke-width="0.6"/></svg>
<div style="position:absolute;left:680px;top:6px;width:1px;height:18px;background:#8a8a8a;"></div>
<svg style="position:absolute;left:688px;top:7px;" width="17" height="16" viewBox="0 0 17 16"><rect x="2.5" y="0.5" width="10" height="9" fill="#e6f4f8" stroke="#5a6a78"/><text x="5" y="8" font-size="8" font-weight="bold" font-family="Liberation Sans" fill="#20a0b0">?</text><path d="M0.5,13 L2.5,10 L12.5,10 L15.5,13 Z" fill="#b0bcc4" stroke="#5a6a78"/><rect x="1" y="13" width="15" height="2" fill="#8a9aa4"/></svg>
<svg style="position:absolute;left:713px;top:6px;" width="32" height="14" viewBox="0 0 32 14"><rect x="1.5" y="2.5" width="9" height="3" fill="#fff" stroke="#606060"/><rect x="19.5" y="2.5" width="9" height="9" fill="#fff" stroke="#606060"/><path d="M20,4.5 L28,4.5" stroke="#606060"/></svg>
<div style="position:absolute;left:343px;top:27px;width:387px;height:617px;background:#fff;"></div>
<div style="position:absolute;left:343px;top:27px;width:387px;height:34px;background:linear-gradient(to bottom,#ffffff 0%,#f6f8fb 40%,#e4eaf2 100%);"></div>
<div style="position:absolute;left:343px;top:61px;width:387px;height:1px;background:#f8fafc;"></div>
<div style="position:absolute;left:343px;top:62px;width:387px;height:1px;background:#c4ccd6;"></div>
<svg style="position:absolute;left:351px;top:38px;" width="16" height="16" viewBox="0 0 16 16"><path d="M1.5,1 L1.5,14.5 L15,14.5" stroke="#6a8898" stroke-width="1" fill="none"/><path d="M0,3 L1.5,1 L3,3 M13,13 L15,14.5 L13,16" stroke="#6a8898" fill="none"/><path d="M3,11 C5,3 7,3 9,8 C11,13 13,12 15,10" stroke="#20c0e0" stroke-width="1.6" fill="none"/></svg>
<div style="position:absolute;left:372.3px;top:38.46px;font-size:16px;line-height:16px;color:#1a3a62;white-space:nowrap;letter-spacing:0.95px;-webkit-text-stroke:0.45px #1a3a62;">Global</div>
<div style="position:absolute;left:350px;top:68px;width:374px;height:22px;border:1px solid #c8d0da;border-bottom:none;border-radius:4px 4px 0 0;background:linear-gradient(to bottom,#dce5f0,#eef3f8 55%,#ffffff);"></div>
<div style="position:absolute;left:350px;top:76px;width:1px;height:14px;background:linear-gradient(to bottom,rgba(255,255,255,0),#ffffff);"></div>
<div style="position:absolute;left:723px;top:76px;width:1px;height:14px;background:linear-gradient(to bottom,rgba(255,255,255,0),#ffffff);"></div>
<svg style="position:absolute;left:356px;top:76px;" width="10" height="6" viewBox="0 0 10 6"><path d="M0.5,0.5 L9,0.5 L4.75,5.5 Z" fill="#1f3a60"/></svg>
<div style="position:absolute;left:371.5px;top:72.84px;font-size:12px;line-height:12px;color:#26467a;white-space:nowrap;letter-spacing:-0.079px;font-weight:bold;">Data</div>
<div style="position:absolute;left:361.5px;top:103.54px;font-size:12px;line-height:12px;color:#000;white-space:nowrap;letter-spacing:-0.374px;">Data set:</div>
<div style="position:absolute;left:361.5px;top:130.34px;font-size:12px;line-height:12px;color:#000;white-space:nowrap;letter-spacing:-0.283px;">Parameter values:</div>
<div style="position:absolute;left:459px;top:98px;width:221px;height:23px;border:1px solid #707070;border-radius:3px;background:linear-gradient(to bottom,#f2f2f2 0%,#ebebeb 50%,#dddddd 51%,#cfcfcf 100%);"></div>
<div style="position:absolute;left:463px;top:103.84px;font-size:12px;line-height:12px;color:#000;white-space:nowrap;letter-spacing:-0.097px;">Probe Solution 3</div>
<svg style="position:absolute;left:667px;top:107px;" width="9" height="6" viewBox="0 0 9 6"><path d="M0.5,0.5 L8.5,0.5 L4.5,5 Z" fill="#000"/></svg>
<div style="position:absolute;left:686px;top:98px;width:26px;height:24px;border:1px solid #707070;border-radius:3px;background:linear-gradient(to bottom,#f2f2f2 0%,#ebebeb 50%,#dddddd 51%,#cfcfcf 100%);"></div>
<svg style="position:absolute;left:692px;top:103px;" width="14" height="14" viewBox="0 0 14 14"><path d="M0,1.5 H9 M0,4.5 H7 M0,7.5 H6 M0,10.5 H6 M0,13.5 H9" stroke="#7a9ac0" stroke-width="1"/><path d="M8,6 L12.5,6 L12.5,13.5 L8,13.5" stroke="#30c030" stroke-width="1.3" fill="none"/><path d="M6,6 L9,3 L9,9 Z" fill="#30c030"/></svg>
<div style="position:absolute;left:361px;top:148px;width:352px;height:123px;border:1px solid #828790;background:#fff;"></div>
<div style="position:absolute;left:363px;top:150px;width:331px;height:120px;background:#3399ff;"></div>
<div style="position:absolute;left:364px;top:152.64px;font-size:12px;line-height:12px;color:#fff;white-space:nowrap;letter-spacing:-0.09px;">1:emissivity=0.6,width_clear=0.5</div>
<div style="position:absolute;left:364px;top:167.64px;font-size:12px;line-height:12px;color:#fff;white-space:nowrap;letter-spacing:-0.09px;">2:emissivity=0.6,width_clear=1</div>
<div style="position:absolute;left:364px;top:182.64px;font-size:12px;line-height:12px;color:#fff;white-space:nowrap;letter-spacing:-0.09px;">3:emissivity=0.6,width_clear=1.5</div>
<div style="position:absolute;left:364px;top:197.64px;font-size:12px;line-height:12px;color:#fff;white-space:nowrap;letter-spacing:-0.09px;">4:emissivity=0.8,width_clear=0.5</div>
<div style="position:absolute;left:364px;top:212.64px;font-size:12px;line-height:12px;color:#fff;white-space:nowrap;letter-spacing:-0.09px;">5:emissivity=0.8,width_clear=1</div>
<div style="position:absolute;left:364px;top:227.64px;font-size:12px;line-height:12px;color:#fff;white-space:nowrap;letter-spacing:-0.09px;">6:emissivity=0.8,width_clear=1.5</div>
<div style="position:absolute;left:364px;top:242.64px;font-size:12px;line-height:12px;color:#fff;white-space:nowrap;letter-spacing:-0.09px;">7:emissivity=1,width_clear=0.5</div>
<div style="position:absolute;left:364px;top:257.64px;font-size:12px;line-height:12px;color:#fff;white-space:nowrap;letter-spacing:-0.09px;">8:emissivity=1,width_clear=1</div>
<div style="position:absolute;left:694px;top:149px;width:18px;height:121px;background:linear-gradient(to right,#e8e8e8,#f4f4f4 40%,#f0f0f0);"></div>
<div style="position:absolute;left:695px;top:168px;width:15px;height:73px;border:1px solid #979797;border-radius:2px;background:linear-gradient(to right,#f7f7f7 0%,#eeeeee 48%,#d9d9d9 52%,#cacaca 100%);"></div>
<svg style="position:absolute;left:699px;top:201px;" width="7" height="8" viewBox="0 0 7 8"><path d="M0,0.5 H7 M0,2.5 H7 M0,4.5 H7 M0,6.5 H7" stroke="#5a5a5a" stroke-width="1"/></svg>
<svg style="position:absolute;left:698px;top:155px;" width="9" height="6" viewBox="0 0 9 6"><path d="M0.5,5 L4.5,1 L8.5,5 Z" fill="#3a3a3a"/></svg>
<svg style="position:absolute;left:698px;top:259px;" width="9" height="6" viewBox="0 0 9 6"><path d="M0.5,0.5 L4.5,5 L8.5,0.5 Z" fill="#3a3a3a"/></svg>
<div style="position:absolute;left:350px;top:288px;width:374px;height:22px;border:1px solid #c8d0da;border-bottom:none;border-radius:4px 4px 0 0;background:linear-gradient(to bottom,#dce5f0,#eef3f8 55%,#ffffff);"></div>
<div style="position:absolute;left:350px;top:296px;width:1px;height:14px;background:linear-gradient(to bottom,rgba(255,255,255,0),#ffffff);"></div>
<div style="position:absolute;left:723px;top:296px;width:1px;height:14px;background:linear-gradient(to bottom,rgba(255,255,255,0),#ffffff);"></div>
<svg style="position:absolute;left:357px;top:296px;" width="10" height="6" viewBox="0 0 10 6"><path d="M0.5,0.5 L9,0.5 L4.75,5.5 Z" fill="#1f3a60"/></svg>
<div style="position:absolute;left:371.5px;top:292.84px;font-size:12px;line-height:12px;color:#26467a;white-space:nowrap;letter-spacing:-0.699px;font-weight:bold;">Expressions</div>
<svg style="position:absolute;left:650px;top:294px;" width="24" height="14" viewBox="0 0 24 14"><path d="M5,1 L8,1 L8,5 L12,5 L12,8 L8,8 L8,12 L5,12 L5,8 L1,8 L1,5 L5,5 Z" fill="#60d040" stroke="#309020" stroke-width="0.8"/><path d="M16,7 L21,7 L18.5,10 Z" fill="#7a8a98"/></svg>
<svg style="position:absolute;left:688px;top:293px;" width="24" height="15" viewBox="0 0 24 15"><path d="M1,1 L7,4.5 L1,8 Z" fill="#60d040" stroke="#309020" stroke-width="0.6"/><path d="M11,7 L5,10.5 L11,14 Z" fill="#f09030" stroke="#c06010" stroke-width="0.6"/><path d="M15,8 L20,8 L17.5,11 Z" fill="#7a8a98"/></svg>
<div style="position:absolute;left:361px;top:324px;width:352px;height:200px;border:1px solid #828790;background:#f0f0f0;"></div>
<div style="position:absolute;left:362px;top:325px;width:350px;height:21px;background:#f0f0f0;"></div>
<div style="position:absolute;left:362px;top:345px;width:350px;height:2px;background:#6a6a6a;"></div>
<div style="position:absolute;left:495px;top:326px;width:1px;height:20px;background:#8a8a8a;"></div>
<div style="position:absolute;left:556px;top:326px;width:1px;height:20px;background:#8a8a8a;"></div>
<div style="position:absolute;left:369px;top:331.64px;font-size:12px;line-height:12px;color:#000;white-space:nowrap;letter-spacing:-0.388px;">Expression</div>
<div style="position:absolute;left:502px;top:331.64px;font-size:12px;line-height:12px;color:#000;white-space:nowrap;letter-spacing:0.333px;">Unit</div>
<div style="position:absolute;left:563px;top:331.64px;font-size:12px;line-height:12px;color:#000;white-space:nowrap;letter-spacing:0.115px;">Description</div>
<div style="position:absolute;left:362px;top:347px;width:349px;height:39px;background:#fff;"></div>
<div style="position:absolute;left:496px;top:347px;width:60px;height:39px;background:#e3e3e3;"></div>
<div style="position:absolute;left:362px;top:366px;width:349px;height:1px;background:#f0f0f0;"></div>
<div style="position:absolute;left:367.5px;top:351.44px;font-size:12px;line-height:12px;color:#000;white-space:nowrap;letter-spacing:-0.341px;">ppb1</div>
<div style="position:absolute;left:561.5px;top:351.44px;font-size:12px;line-height:12px;color:#000;white-space:nowrap;letter-spacing:-0.098px;">Point probe expression</div>
<svg style="position:absolute;left:365px;top:532px;" width="14" height="15" viewBox="0 0 14 15"><path d="M7,1 L12.5,7 L9.5,7 L9.5,13.5 L4.5,13.5 L4.5,7 L1.5,7 Z" fill="#a0f0f0" stroke="#20a8b8" stroke-width="1"/></svg>
<svg style="position:absolute;left:388px;top:532px;" width="14" height="15" viewBox="0 0 14 15"><path d="M7,14 L12.5,8 L9.5,8 L9.5,1.5 L4.5,1.5 L4.5,8 L1.5,8 Z" fill="#a0f0f0" stroke="#20a8b8" stroke-width="1"/></svg>
<svg style="position:absolute;left:410px;top:532px;" width="15" height="15" viewBox="0 0 15 15"><path d="M2,2 L13,13 M13,2 L2,13" stroke="#e07818" stroke-width="3" stroke-linecap="round"/><path d="M2,2 L13,13 M13,2 L2,13" stroke="#f8a050" stroke-width="1"/></svg>
<div style="position:absolute;left:361.5px;top:557.84px;font-size:12px;line-height:12px;color:#000;white-space:nowrap;letter-spacing:-0.416px;">Expression:</div>
<div style="position:absolute;left:361px;top:576px;width:352px;height:21px;border:1px solid #a8a8a8;border-radius:2px;background:#f0f0f0;"></div>
<div style="position:absolute;left:361.5px;top:604.24px;font-size:12px;line-height:12px;color:#000;white-space:nowrap;letter-spacing:0.016px;">Description:</div>
<div style="position:absolute;left:361px;top:622px;width:352px;height:21px;border:1px solid #a8a8a8;border-radius:2px;background:#f0f0f0;"></div>
<div style="position:absolute;left:730px;top:27px;width:17px;height:617px;background:linear-gradient(to right,#e8e8e8,#f4f4f4 40%,#f0f0f0);"></div>
<div style="position:absolute;left:730px;top:47px;width:15px;height:384px;border:1px solid #979797;border-radius:2px;background:linear-gradient(to right,#f7f7f7 0%,#eeeeee 48%,#d9d9d9 52%,#cacaca 100%);"></div>
<svg style="position:absolute;left:735px;top:235px;" width="7" height="8" viewBox="0 0 7 8"><path d="M0,0.5 H7 M0,2.5 H7 M0,4.5 H7 M0,6.5 H7" stroke="#5a5a5a" stroke-width="1"/></svg>
<svg style="position:absolute;left:734px;top:35px;" width="9" height="6" viewBox="0 0 9 6"><path d="M0.5,5 L4.5,1 L8.5,5 Z" fill="#3a3a3a"/></svg>
<svg style="position:absolute;left:734px;top:633px;" width="9" height="6" viewBox="0 0 9 6"><path d="M0.5,0.5 L4.5,5 L8.5,0.5 Z" fill="#3a3a3a"/></svg>
<svg style="position:absolute;left:750px;top:0px;" width="521" height="30" viewBox="0 0 521 30"><defs><linearGradient id="gtg" x1="0" y1="0" x2="0" y2="1"><stop offset="0" stop-color="#fbfbfb"/><stop offset="1" stop-color="#f0f0f0"/></linearGradient></defs><path d="M2.5,30 L2.5,10 Q2.5,3.5 9,3.5 L66,3.5 C80,3.5 82,26 100,26 L100,30 Z" fill="url(#gtg)"/><path d="M2.5,30 L2.5,10 Q2.5,3.5 9,3.5 L66,3.5 C80,3.5 82,26.5 100,26.5 L518,26.5" stroke="#a0a0a0" stroke-width="1" fill="none"/><path d="M66,3.5 L511,3.5 Q518.5,3.5 518.5,11 L518.5,30" stroke="#a0a0a0" stroke-width="1" fill="none"/></svg>
<div style="position:absolute;left:752px;top:27px;width:1px;height:273px;background:#a0a0a0;"></div>
<div style="position:absolute;left:1268px;top:27px;width:1px;height:273px;background:#a0a0a0;"></div>
<div style="position:absolute;left:752px;top:299px;width:517px;height:1px;background:#a0a0a0;"></div>
<div style="position:absolute;left:753px;top:27px;width:515px;height:2px;background:#f0f0f0;"></div>
<div style="position:absolute;left:753px;top:29px;width:515px;height:270px;background:#fff;"></div>
<svg style="position:absolute;left:756px;top:8px;" width="16" height="15" viewBox="0 0 16 15"><defs><radialGradient id="sph" cx="0.4" cy="0.4" r="0.6"><stop offset="0" stop-color="#a0f0ff"/><stop offset="1" stop-color="#10a0c0"/></radialGradient><linearGradient id="cone" x1="0" x2="1"><stop offset="0" stop-color="#8050a0"/><stop offset="1" stop-color="#d0a8e0"/></linearGradient></defs><path d="M9,0 L14.5,12 L5,12 Z" fill="url(#cone)"/><circle cx="5" cy="10" r="4.5" fill="url(#sph)"/></svg>
<div style="position:absolute;left:776.5px;top:10.04px;font-size:12px;line-height:12px;color:#000;white-space:nowrap;letter-spacing:-0.245px;">Graphics</div>
<svg style="position:absolute;left:1056px;top:8px;" width="14" height="14" viewBox="0 0 14 14"><circle cx="6" cy="6" r="4.8" fill="#eef4f8" stroke="#5a7488" stroke-width="1.6"/><path d="M9.5,9.5 L13,13" stroke="#4a6478" stroke-width="2.4" stroke-linecap="round"/><path d="M3.5,6 H8.5" stroke="#3a5468" stroke-width="1.2"/><path d="M6,3.5 V8.5" stroke="#3a5468" stroke-width="1.2"/></svg>
<svg style="position:absolute;left:1079px;top:8px;" width="14" height="14" viewBox="0 0 14 14"><circle cx="6" cy="6" r="4.8" fill="#eef4f8" stroke="#5a7488" stroke-width="1.6"/><path d="M9.5,9.5 L13,13" stroke="#4a6478" stroke-width="2.4" stroke-linecap="round"/><path d="M3.5,6 H8.5" stroke="#3a5468" stroke-width="1.2"/></svg>
<svg style="position:absolute;left:1100px;top:8px;" width="17" height="14" viewBox="0 0 17 14"><rect x="0.5" y="5.5" width="7" height="7" fill="none" stroke="#606060" stroke-dasharray="1.5 1"/><circle cx="9" cy="6" r="4.5" fill="none" stroke="#8a9aa8" stroke-width="1.4"/><path d="M12,9.5 L15.5,13" stroke="#8a9aa8" stroke-width="2.2" stroke-linecap="round"/><path d="M7,6 H11 M9,4 V8" stroke="#6a7a88"/></svg>
<svg style="position:absolute;left:1124px;top:7px;" width="15" height="15" viewBox="0 0 15 15"><rect x="0.5" y="0.5" width="14" height="14" fill="#fff" stroke="#5a6a70"/><path d="M7.5,1.5 L9.5,4 L5.5,4 Z M7.5,13.5 L9.5,11 L5.5,11 Z M1.5,7.5 L4,5.5 L4,9.5 Z M13.5,7.5 L11,5.5 L11,9.5 Z" fill="#40c040"/><path d="M7.5,4 V11 M4,7.5 H11" stroke="#30a030" stroke-width="1"/><circle cx="7.5" cy="7.5" r="2.6" fill="#d8f8d8" stroke="#30a030" stroke-width="1"/><path d="M7.5,5.5 V9.5 M5.5,7.5 H9.5" stroke="#30a030" stroke-width="1"/></svg>
<div style="position:absolute;left:1146px;top:6px;width:1px;height:18px;background:#8a8a8a;"></div>
<svg style="position:absolute;left:1155px;top:8px;" width="16" height="14" viewBox="0 0 16 14"><path d="M4.5,0 V13 M7.5,0 V13 M10.5,0 V13 M13.5,0 V13" stroke="#20b0d0" stroke-width="1.2"/><path d="M1,13.5 H15" stroke="#7a8a98" stroke-dasharray="1 1.5"/><path d="M1,0 V13" stroke="#7a8a98" stroke-dasharray="1 1.5"/></svg>
<svg style="position:absolute;left:1178px;top:8px;" width="16" height="14" viewBox="0 0 16 14"><path d="M3,1.5 H16 M3,4.5 H16 M3,7.5 H16 M3,10.5 H16" stroke="#20b0d0" stroke-width="1.2"/><path d="M1,13.5 H15" stroke="#7a8a98" stroke-dasharray="1 1.5"/><path d="M1.5,0 V13" stroke="#7a8a98" stroke-dasharray="1 1.5"/></svg>
<div style="position:absolute;left:1200px;top:6px;width:1px;height:18px;background:#8a8a8a;"></div>
<svg style="position:absolute;left:1208px;top:8px;" width="17" height="14" viewBox="0 0 17 14"><path d="M0.5,3 L5,3 L6,0.5 L11,0.5 L12,3 L16.5,3 L16.5,13 L0.5,13 Z" fill="#2a2a2a"/><circle cx="8.5" cy="8" r="4" fill="#606060" stroke="#e0e0e0" stroke-width="0.8"/><circle cx="8.5" cy="8" r="2" fill="#101010"/></svg>
<svg style="position:absolute;left:1233px;top:6px;" width="32" height="14" viewBox="0 0 32 14"><rect x="1.5" y="2.5" width="9" height="3" fill="#fff" stroke="#606060"/><rect x="19.5" y="2.5" width="9" height="9" fill="#fff" stroke="#606060"/><path d="M20,4.5 L28,4.5" stroke="#606060"/></svg>
<svg style="position:absolute;left:0px;top:0px;" width="1271" height="644" viewBox="0 0 1271 644"><path d="M821.5,56 V258" stroke="#000" stroke-width="1" stroke-dasharray="1 3" stroke-dashoffset="-3"/><path d="M862.5,56 V258" stroke="#000" stroke-width="1" stroke-dasharray="1 3" stroke-dashoffset="-3"/><path d="M903.5,56 V258" stroke="#000" stroke-width="1" stroke-dasharray="1 3" stroke-dashoffset="-3"/><path d="M944.5,56 V258" stroke="#000" stroke-width="1" stroke-dasharray="1 3" stroke-dashoffset="-3"/><path d="M986.5,56 V258" stroke="#000" stroke-width="1" stroke-dasharray="1 3" stroke-dashoffset="-3"/><path d="M1027.5,56 V258" stroke="#000" stroke-width="1" stroke-dasharray="1 3" stroke-dashoffset="-3"/><path d="M1068.5,56 V258" stroke="#000" stroke-width="1" stroke-dasharray="1 3" stroke-dashoffset="-3"/><path d="M1110.5,56 V258" stroke="#000" stroke-width="1" stroke-dasharray="1 3" stroke-dashoffset="-3"/><path d="M1151.5,56 V258" stroke="#000" stroke-width="1" stroke-dasharray="1 3" stroke-dashoffset="-3"/><path d="M1192.5,56 V258" stroke="#000" stroke-width="1" stroke-dasharray="1 3" stroke-dashoffset="-3"/><path d="M1233.5,56 V258" stroke="#000" stroke-width="1" stroke-dasharray="1 3" stroke-dashoffset="-3"/><path d="M801,86.5 H1253" stroke="#000" stroke-width="1" stroke-dasharray="1 3" stroke-dashoffset="-3"/><path d="M801,124.5 H1253" stroke="#000" stroke-width="1" stroke-dasharray="1 3" stroke-dashoffset="-3"/><path d="M801,163.5 H1253" stroke="#000" stroke-width="1" stroke-dasharray="1 3" stroke-dashoffset="-3"/><path d="M801,202.5 H1253" stroke="#000" stroke-width="1" stroke-dasharray="1 3" stroke-dashoffset="-3"/><path d="M801,241.5 H1253" stroke="#000" stroke-width="1" stroke-dasharray="1 3" stroke-dashoffset="-3"/><rect x="800.5" y="55.5" width="453" height="203" fill="none" stroke="#000" stroke-width="1"/><path d="M821.5,56 V60 M821.5,258 V254" stroke="#000"/><path d="M862.5,56 V60 M862.5,258 V254" stroke="#000"/><path d="M903.5,56 V60 M903.5,258 V254" stroke="#000"/><path d="M944.5,56 V60 M944.5,258 V254" stroke="#000"/><path d="M986.5,56 V60 M986.5,258 V254" stroke="#000"/><path d="M1027.5,56 V60 M1027.5,258 V254" stroke="#000"/><path d="M1068.5,56 V60 M1068.5,258 V254" stroke="#000"/><path d="M1110.5,56 V60 M1110.5,258 V254" stroke="#000"/><path d="M1151.5,56 V60 M1151.5,258 V254" stroke="#000"/><path d="M1192.5,56 V60 M1192.5,258 V254" stroke="#000"/><path d="M1233.5,56 V60 M1233.5,258 V254" stroke="#000"/><path d="M801,86.5 H805 M1253,86.5 H1249" stroke="#000"/><path d="M801,124.5 H805 M1253,124.5 H1249" stroke="#000"/><path d="M801,163.5 H805 M1253,163.5 H1249" stroke="#000"/><path d="M801,202.5 H805 M1253,202.5 H1249" stroke="#000"/><path d="M801,241.5 H805 M1253,241.5 H1249" stroke="#000"/><polyline points="821.5,72 1027.5,66 1233.5,64 821.5,174.5 1027.5,169.3 1233.5,168.3 821.5,250.7 1027.5,246.5 1233.5,246" fill="none" stroke="#000080" stroke-width="1" shape-rendering="crispEdges"/><rect x="1035.5" y="68.5" width="206" height="23" fill="#fff" stroke="#000"/><path d="M1040,79.5 H1066" stroke="#000080" stroke-width="1.1"/></svg>
<div style="position:absolute;left:1070.5px;top:74.14px;font-size:12px;line-height:12px;color:#000;white-space:nowrap;letter-spacing:0.194px;">Point probe expression (ppb1)</div>
<div style="position:absolute;left:791px;top:265.64px;width:61px;text-align:center;font-size:12px;line-height:12px;color:#000;">0.5</div>
<div style="position:absolute;left:832px;top:265.64px;width:61px;text-align:center;font-size:12px;line-height:12px;color:#000;">0.6</div>
<div style="position:absolute;left:873px;top:265.64px;width:61px;text-align:center;font-size:12px;line-height:12px;color:#000;">0.7</div>
<div style="position:absolute;left:914px;top:265.64px;width:61px;text-align:center;font-size:12px;line-height:12px;color:#000;">0.8</div>
<div style="position:absolute;left:956px;top:265.64px;width:61px;text-align:center;font-size:12px;line-height:12px;color:#000;">0.9</div>
<div style="position:absolute;left:997px;top:265.64px;width:61px;text-align:center;font-size:12px;line-height:12px;color:#000;">1</div>
<div style="position:absolute;left:1038px;top:265.64px;width:61px;text-align:center;font-size:12px;line-height:12px;color:#000;">1.1</div>
<div style="position:absolute;left:1080px;top:265.64px;width:61px;text-align:center;font-size:12px;line-height:12px;color:#000;">1.2</div>
<div style="position:absolute;left:1121px;top:265.64px;width:61px;text-align:center;font-size:12px;line-height:12px;color:#000;">1.3</div>
<div style="position:absolute;left:1162px;top:265.64px;width:61px;text-align:center;font-size:12px;line-height:12px;color:#000;">1.4</div>
<div style="position:absolute;left:1203px;top:265.64px;width:61px;text-align:center;font-size:12px;line-height:12px;color:#000;">1.5</div>
<div style="position:absolute;left:744px;top:82.44px;width:50px;text-align:right;font-size:12px;line-height:12px;color:#000;">415</div>
<div style="position:absolute;left:744px;top:120.44px;width:50px;text-align:right;font-size:12px;line-height:12px;color:#000;">410</div>
<div style="position:absolute;left:744px;top:159.44px;width:50px;text-align:right;font-size:12px;line-height:12px;color:#000;">405</div>
<div style="position:absolute;left:744px;top:198.44px;width:50px;text-align:right;font-size:12px;line-height:12px;color:#000;">400</div>
<div style="position:absolute;left:744px;top:237.44px;width:50px;text-align:right;font-size:12px;line-height:12px;color:#000;">395</div>
<svg style="position:absolute;left:750px;top:299px;" width="521" height="31" viewBox="0 0 521 31"><defs><linearGradient id="rtg" x1="0" y1="0" x2="0" y2="1"><stop offset="0" stop-color="#fbfbfb"/><stop offset="1" stop-color="#f0f0f0"/></linearGradient><linearGradient id="itg" x1="0" y1="0" x2="0" y2="1"><stop offset="0" stop-color="#f0f0f0"/><stop offset="1" stop-color="#e6e6e6"/></linearGradient></defs><path d="M2.5,28 L2.5,11 Q2.5,4.5 9,4.5 L78,4.5 Q83.5,4.5 83.5,10 L83.5,28 Z" fill="url(#itg)" stroke="#a8a8a8"/><path d="M83.5,28 L83.5,10 Q83.5,4.5 89,4.5 L151,4.5 Q156.5,4.5 156.5,10 L156.5,27 Z" fill="url(#itg)" stroke="#a8a8a8"/><path d="M156.5,29 L156.5,10 Q156.5,4.5 162,4.5 L232,4.5 C246,4.5 246,28 256,28 L256,29 Z" fill="url(#rtg)"/><path d="M156.5,29 L156.5,10 Q156.5,4.5 162,4.5 L232,4.5 C246,4.5 246,27.5 256,27.5 L518,27.5" stroke="#a0a0a0" fill="none"/><path d="M232,4.5 L511,4.5 Q518.5,4.5 518.5,12 L518.5,31" stroke="#a0a0a0" fill="none"/><path d="M2.5,26 L2.5,31" stroke="#a0a0a0"/></svg>
<div style="position:absolute;left:752px;top:326px;width:1px;height:318px;background:#a0a0a0;"></div>
<div style="position:absolute;left:1268px;top:326px;width:1px;height:318px;background:#a0a0a0;"></div>
<svg style="position:absolute;left:756px;top:310px;" width="15" height="10" viewBox="0 0 15 10"><rect x="0.5" y="0.5" width="14" height="9" fill="#f4f8fb" stroke="#7a98b0"/><path d="M0.5,0.5 L7.5,6 L14.5,0.5" stroke="#7a98b0" fill="none"/></svg>
<div style="position:absolute;left:776px;top:309.84px;font-size:12px;line-height:12px;color:#000;white-space:nowrap;letter-spacing:-0.413px;">Messages</div>
<svg style="position:absolute;left:835px;top:312px;" width="17" height="6" viewBox="0 0 17 6"><rect x="0.5" y="0.5" width="16" height="5" fill="#e8f0f0" stroke="#8aa0a8"/><rect x="1" y="1" width="10" height="4" fill="#70c830"/></svg>
<div style="position:absolute;left:855px;top:309.84px;font-size:12px;line-height:12px;color:#000;white-space:nowrap;letter-spacing:-0.302px;">Progress</div>
<svg style="position:absolute;left:910px;top:308px;" width="12" height="15" viewBox="0 0 12 15"><rect x="0.5" y="0.5" width="11" height="14" fill="#f8fbfd" stroke="#7a98b0"/><path d="M2,3.5 H4 M5,3.5 H10 M2,6.5 H4 M5,6.5 H10 M2,9.5 H4 M5,9.5 H10 M2,12.5 H4 M5,12.5 H10" stroke="#4a7aa0"/></svg>
<div style="position:absolute;left:928px;top:309.84px;font-size:12px;line-height:12px;color:#000;white-space:nowrap;letter-spacing:-0.352px;">Results</div>
<svg style="position:absolute;left:972px;top:310px;" width="12" height="11" viewBox="0 0 12 11"><path d="M1,1 L4,1 L6,3.5 L8,1 L11,1 L7.5,5.5 L11,10 L8,10 L6,7.5 L4,10 L1,10 L4.5,5.5 Z" fill="#fff" stroke="#8a8a8a" stroke-width="0.9"/></svg>
<svg style="position:absolute;left:1079px;top:308px;" width="17" height="15" viewBox="0 0 17 15"><text x="0" y="6.5" font-size="7.5" font-weight="bold" font-family="Liberation Mono" fill="#208098" letter-spacing="-0.8">8.85</text><text x="0" y="14" font-size="7.5" font-weight="bold" font-family="Liberation Mono" fill="#208098" letter-spacing="-0.8">e-12</text></svg>
<svg style="position:absolute;left:1103px;top:306px;" width="14" height="16" viewBox="0 0 14 16"><rect x="6" y="0" width="2" height="7" fill="#806040"/><path d="M4,7 L10,7 L13,15 L1,15 Z" fill="#e8c070" stroke="#c09040" stroke-width="0.6"/><path d="M4,10 L3,15 M7,10 L7,15 M10,10 L11,15" stroke="#c09040" stroke-width="0.6"/></svg>
<svg style="position:absolute;left:1126px;top:308px;" width="13" height="13" viewBox="0 0 13 13"><path d="M2,2 L11,11 M11,2 L2,11" stroke="#e87818" stroke-width="3" stroke-linecap="round"/></svg>
<svg style="position:absolute;left:1147px;top:307px;" width="18" height="15" viewBox="0 0 18 15"><path d="M1,14 L1,8 L4,6 L8,9 L10,12 L10,14 Z" fill="#e83020"/><path d="M1,14 L1,10 L8,11 L10,14 Z" fill="#f0c020"/><path d="M1,14 L1,12 L10,13 L10,14 Z" fill="#40c060"/><path d="M7,12 L15,2 L17,1 L16,4 L9,13 Z" fill="#4a8ab0" stroke="#2a6088" stroke-width="0.6"/></svg>
<svg style="position:absolute;left:1170px;top:308px;" width="17" height="15" viewBox="0 0 17 15"><rect x="0.5" y="0.5" width="10" height="10" fill="#fff" stroke="#606060"/><rect x="5.5" y="4.5" width="10" height="10" fill="#fff" stroke="#606060"/><path d="M5,9.5 H10 M8,7 L11,9.5 L8,12 Z" stroke="#30b030" stroke-width="1.3" fill="#60d060"/></svg>
<svg style="position:absolute;left:1196px;top:308px;" width="14" height="13" viewBox="0 0 14 13"><rect x="0.5" y="0.5" width="13" height="12" fill="#fff" stroke="#8ab0c8"/><path d="M4.5,0.5 V12.5" stroke="#8ab0c8"/><path d="M7.5,0.5 V12.5" stroke="#8ab0c8"/><path d="M10.5,0.5 V12.5" stroke="#8ab0c8"/><path d="M0.5,3.5 H13.5" stroke="#8ab0c8"/><path d="M0.5,6.5 H13.5" stroke="#8ab0c8"/><path d="M0.5,9.5 H13.5" stroke="#8ab0c8"/></svg>
<svg style="position:absolute;left:1217px;top:312px;" width="9" height="6" viewBox="0 0 9 6"><path d="M0.5,0.5 L8.5,0.5 L4.5,5 Z" fill="#000"/></svg>
<svg style="position:absolute;left:1233px;top:306px;" width="32" height="14" viewBox="0 0 32 14"><rect x="1.5" y="2.5" width="9" height="3" fill="#fff" stroke="#606060"/><rect x="19.5" y="2.5" width="9" height="9" fill="#fff" stroke="#606060"/><path d="M20,4.5 L28,4.5" stroke="#606060"/></svg>
<div style="position:absolute;left:753px;top:327px;width:515px;height:317px;background:#fff;"></div>
<div style="position:absolute;left:755px;top:329px;width:511px;height:315px;border:1px solid #828790;border-bottom:none;background:#fff;"></div>
<div style="position:absolute;left:756px;top:330px;width:508px;height:23px;background:linear-gradient(to bottom,#ffffff 0%,#ffffff 40%,#f1f2f4 41%,#eceef1 100%);"></div>
<div style="position:absolute;left:756px;top:353px;width:508px;height:1px;background:#d5d5d5;"></div>
<div style="position:absolute;left:771px;top:330px;width:1px;height:23px;background:#e0e0e0;"></div>
<div style="position:absolute;left:771px;top:354px;width:1px;height:290px;background:#ececec;"></div>
<div style="position:absolute;left:756px;top:373px;width:508px;height:1px;background:#ececec;"></div>
<div style="position:absolute;left:756px;top:392px;width:508px;height:1px;background:#ececec;"></div>
<div style="position:absolute;left:756px;top:411px;width:508px;height:1px;background:#ececec;"></div>
<div style="position:absolute;left:756px;top:430px;width:508px;height:1px;background:#ececec;"></div>
<div style="position:absolute;left:756px;top:449px;width:508px;height:1px;background:#ececec;"></div>
<div style="position:absolute;left:756px;top:468px;width:508px;height:1px;background:#ececec;"></div>
<div style="position:absolute;left:756px;top:487px;width:508px;height:1px;background:#ececec;"></div>
<div style="position:absolute;left:756px;top:506px;width:508px;height:1px;background:#ececec;"></div>
<div style="position:absolute;left:756px;top:525px;width:508px;height:1px;background:#ececec;"></div>
<div style="position:absolute;left:756px;top:544px;width:508px;height:1px;background:#ececec;"></div>
<div style="position:absolute;left:756px;top:563px;width:508px;height:1px;background:#ececec;"></div>
<div style="position:absolute;left:756px;top:582px;width:508px;height:1px;background:#ececec;"></div>
<div style="position:absolute;left:756px;top:601px;width:508px;height:1px;background:#ececec;"></div>
<div style="position:absolute;left:756px;top:620px;width:508px;height:1px;background:#ececec;"></div>
<div style="position:absolute;left:756px;top:639px;width:508px;height:1px;background:#ececec;"></div>
</body></html>
